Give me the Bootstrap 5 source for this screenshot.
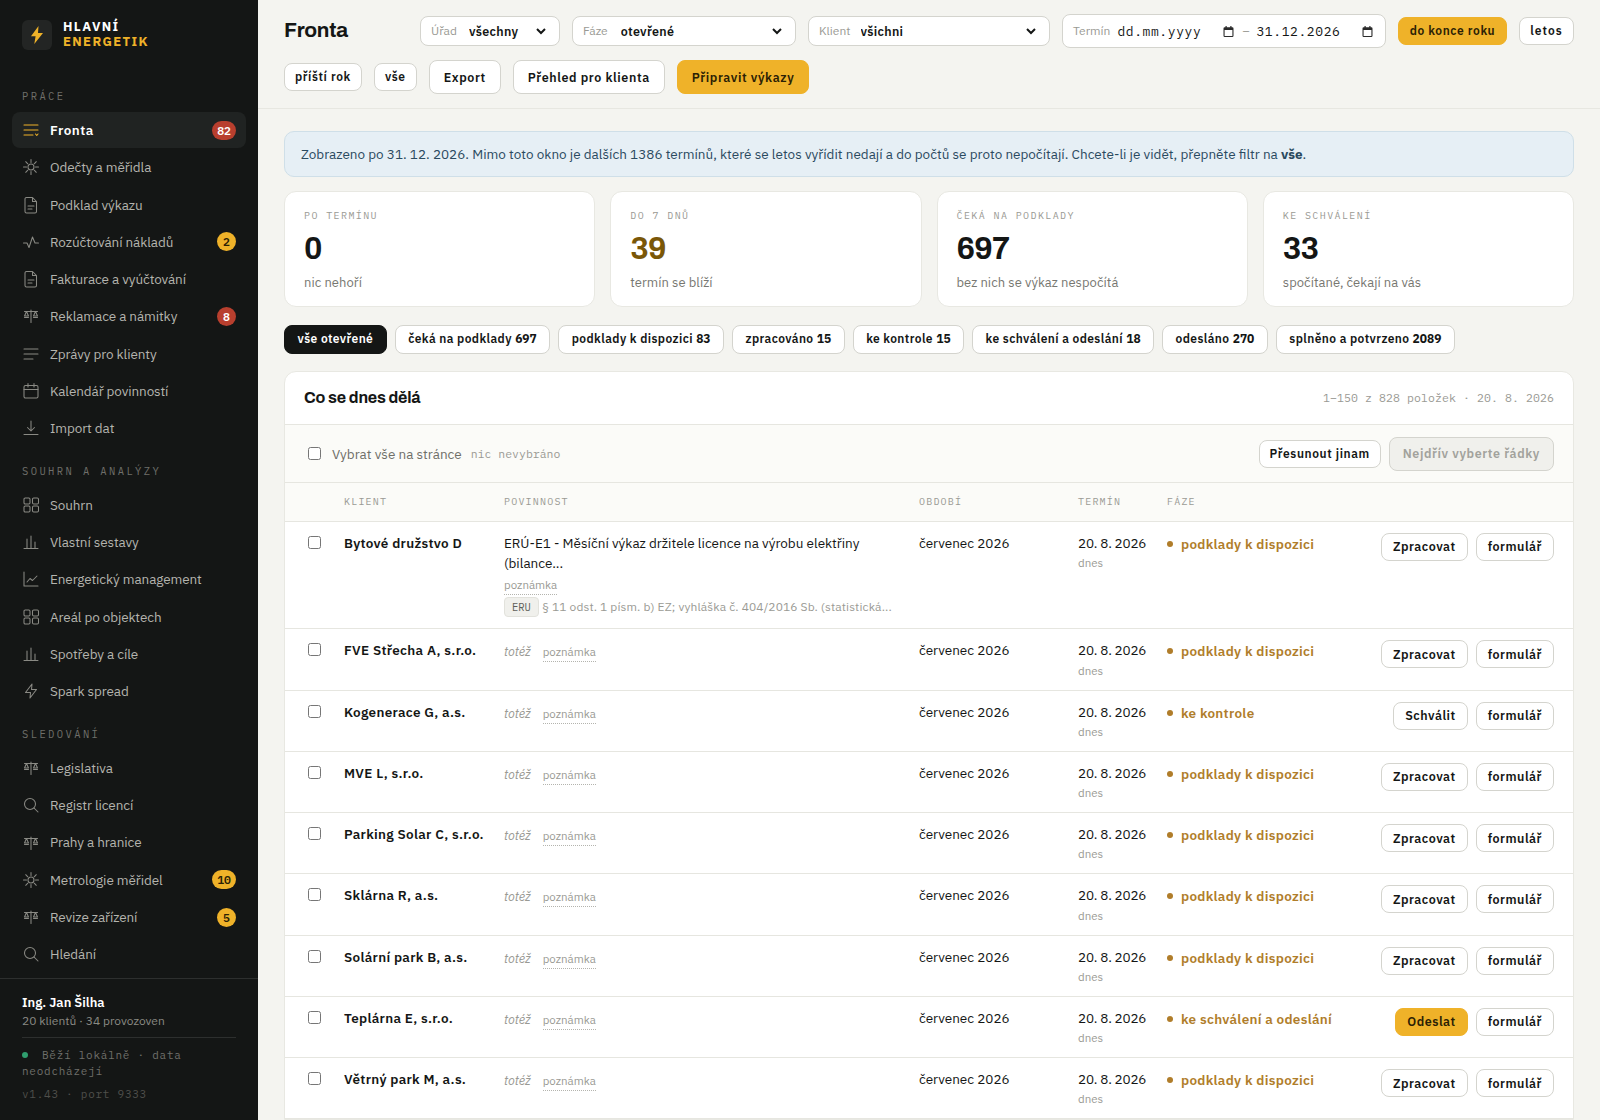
<!DOCTYPE html>
<html lang="cs">
  <head>
    <meta charset="UTF-8" />
    <meta name="viewport" content="width=device-width, initial-scale=1.0" />
    <title>Fronta</title>
    <link href="https://cdn.jsdelivr.net/npm/bootstrap@5.3.2/dist/css/bootstrap.min.css" rel="stylesheet" />
    <style>
      :root {
        --ink: #141615;
        --amber: #efb229;
        --line: #e6e6e0;
        --mute: #8f8f89;
        --sans: "IBM Plex Sans", "Noto Sans", "Liberation Sans", sans-serif;
        --mono: "IBM Plex Mono", "Liberation Mono", monospace;
        --head: "Archivo", "Liberation Sans", sans-serif;
      }
      html, body { height: 100%; }
      body {
        background-color: #f4f4f0;
        color: var(--ink);
        font-family: var(--sans);
        font-size: 13.5px;
        line-height: 1.5;
        overflow: hidden;
      }
      .app-shell { height: 1120px; }

      /* sidebar */
      .side {
        width: 258px;
        flex: none;
        background-color: var(--ink);
        color: #b4b4ae;
      }
      .side-brand { padding: 20px 22px 0; gap: 11px; height: 88px; }
      .brand-mark {
        width: 30px;
        height: 30px;
        border-radius: 6px;
        background-color: #232524;
        color: var(--amber);
      }
      .brand-name {
        font-size: 13px;
        font-weight: 700;
        line-height: 14.5px;
        letter-spacing: 1.4px;
        color: #fff;
      }
      .brand-name span { display: block; color: var(--amber); }
      .side-label {
        font-family: var(--mono);
        font-size: 10.5px;
        letter-spacing: 2.4px;
        color: #6f6f6a;
        padding: 0 10px;
        line-height: 16px;
        margin: 0 0 8px;
      }
      .side-nav { padding: 0 12px; }
      .side-group { margin-bottom: 16.6px; }
      .side-link {
        display: flex;
        align-items: center;
        gap: 10px;
        height: 36.25px;
        margin-bottom: 1px;
        padding: 0 10px;
        border-radius: 8px;
        letter-spacing: -.1px;
        color: #b4b4ae;
        text-decoration: none;
      }
      .side-link svg { width: 18px; height: 18px; flex: none; color: #8a8a84; }
      .side-link.active { background-color: #202322; color: #fff; font-weight: 600; letter-spacing: .5px; }
      .side-link.active svg { color: var(--amber); }
      .nav-count {
        margin-left: auto;
        min-width: 19px;
        height: 19px;
        padding: 0 5px;
        border-radius: 10px;
        font-family: var(--mono);
        font-size: 11.5px;
        font-weight: 600;
        letter-spacing: 0;
        line-height: 19px;
        text-align: center;
      }
      .nav-count.red { background-color: #b83f2e; color: #fff; }
      .nav-count.amber { background-color: var(--amber); color: #2b2105; }
      .side-foot { border-top: 1px solid #2d2f2e; padding: 14px 22px 0; height: 142px; margin-top: auto; }
      .foot-name { font-weight: 600; color: #fff; font-size: 13px; line-height: 19px; }
      .foot-sub { font-size: 12px; color: #8a8a84; line-height: 17px; padding-bottom: 8px; border-bottom: 1px solid #2d2f2e; }
      .foot-run { font-family: var(--mono); font-size: 11px; line-height: 16px; letter-spacing: .75px; color: #6f6f6a; margin-top: 9px; }
      .foot-dot { display: inline-block; width: 6px; height: 6px; border-radius: 50%; background-color: #2f9e6e; margin-right: 14px; vertical-align: 1px; }
      .foot-ver { font-family: var(--mono); font-size: 11px; line-height: 16px; letter-spacing: .75px; color: #4f4f4b; margin-top: 7px; }

      /* top bar */
      .main-col { min-width: 0; }
      .top-bar { padding: 14px 26px; gap: 12px; border-bottom: 1px solid #e7e7e1; }
      .page-title {
        font-family: var(--head);
        font-size: 21px;
        font-weight: 700;
        letter-spacing: -.3px;
        margin: 0 60px 0 0;
        width: 64px;
        white-space: nowrap;
      }
      .filter-box {
        display: flex;
        align-items: center;
        height: 30px;
        padding: 0 10px;
        gap: 9px;
        background-color: #fff;
        border: 1px solid #d4d4ce;
        border-radius: 8px;
      }
      .filter-box label { font-size: 12px; color: #9a9a94; margin: 0; }
      .filter-box select {
        flex: 1;
        min-width: 0;
        border: 0;
        background: transparent;
        padding: 0;
        outline: 0;
        font-family: var(--sans);
        font-size: 12.5px;
        font-weight: 600;
        letter-spacing: .3px;
        color: var(--ink);
      }
      .fb-office { width: 140px; gap: 8px; }
      .fb-phase { width: 224px; }
      .fb-client { width: 242px; gap: 6px; }
      .fb-date { width: 324px; height: 34px; gap: 7px; padding-right: 12px; }
      .date-field { display: flex; align-items: center; width: 118px; flex: none; }
      .date-field input {
        flex: 1;
        min-width: 0;
        height: 20px;
        border: 0;
        background: transparent;
        padding: 0;
        outline: 0;
        font-family: var(--mono);
        font-size: 13px;
        letter-spacing: .6px;
        color: var(--ink);
      }
      .date-field svg { margin-right: 1px; }
      .fb-date > span { color: #9a9a94; font-size: 12px; }
      .act {
        height: 34px;
        padding: 0 14px;
        background-color: #fff;
        border: 1px solid #d4d4ce;
        border-radius: 8px;
        font-size: 12.5px;
        font-weight: 600;
        letter-spacing: .6px;
        color: var(--ink);
        white-space: nowrap;
      }
      .act.slim { height: 28px; padding: 0 10px; font-size: 12px; }
      .act.gold { background-color: var(--amber); border-color: var(--amber); color: #2b2105; }
      .act.off { background-color: #f0f0ec; color: #a2a29c; padding: 0 13px; }
      .act.to-year { min-width: 109px; }
      .act.this-year { min-width: 55px; letter-spacing: 1px; }

      /* content */
      .page-body { padding: 22px 26px 0; }
      .note-bar {
        background-color: #e6eff5;
        border: 1px solid #cfdfe8;
        border-radius: 10px;
        padding: 12px 16px;
        color: #2b4a5f;
        margin-bottom: 14px;
      }
      .stat-grid { display: grid; grid-template-columns: repeat(4, 1fr); gap: 15px; margin-bottom: 18px; }
      .stat-box {
        height: 115.5px;
        padding: 15.5px 19px 0;
        background-color: #fff;
        border: 1px solid #e8e8e2;
        border-radius: 12px;
      }
      .stat-label { font-family: var(--mono); font-size: 10px; letter-spacing: 1.4px; color: #9a9a94; line-height: 15px; }
      .stat-num { font-family: var(--head); font-size: 31px; font-weight: 700; letter-spacing: -.8px; line-height: 40px; margin-top: 6px; }
      .stat-num.warn { color: #7a5708; }
      .stat-sub { font-size: 13px; letter-spacing: .05px; color: #777771; line-height: 19px; margin-top: 4px; }
      .tab-row { gap: 8px; margin-bottom: 17px; }
      .tab-chip {
        height: 29px;
        padding: 0 12.5px;
        background-color: #fff;
        border: 1px solid #d4d4ce;
        border-radius: 8px;
        font-size: 12px;
        font-weight: 600;
        letter-spacing: .4px;
        color: var(--ink);
        white-space: nowrap;
      }
      .tab-chip b { font-weight: 700; letter-spacing: 0; }
      .tab-chip.active { background-color: var(--ink); border-color: var(--ink); color: #fff; }
      .queue-card { background-color: #fff; border: 1px solid #e8e8e2; border-radius: 12px 12px 0 0; }
      .queue-head { height: 53px; padding: 0 19px; border-bottom: 1px solid var(--line); }
      .queue-title { font-family: var(--head); font-size: 16px; font-weight: 700; letter-spacing: -.2px; margin: 0; }
      .queue-meta { font-family: var(--mono); font-size: 11.5px; letter-spacing: .1px; color: #9a9a94; }
      .queue-tools { height: 58.5px; padding: 0 19px; background-color: #fbfbf8; border-bottom: 1px solid var(--line); }
      .queue-tools input, .queue-table input { margin: 3px 3px 3px 4px; }
      .tool-label { color: #6f6f69; font-size: 13.5px; margin-left: 8px; padding-top: 1px; }
      .tool-state { font-family: var(--mono); font-size: 11.5px; color: #9a9a94; margin-left: 9px; padding-top: 1px; }
      .queue-table { table-layout: fixed; width: 100%; margin: 0; color: var(--ink); }
      .queue-table th {
        height: 38px;
        padding: 0 10px 2px;
        background-color: #fbfbf8;
        border-bottom: 1px solid var(--line);
        font-family: var(--mono);
        font-size: 10px;
        font-weight: 400;
        letter-spacing: 1.2px;
        color: #9a9a94;
        vertical-align: middle;
      }
      .queue-table td {
        padding: 11px 10px 11px;
        border-bottom: 1px solid var(--line);
        vertical-align: top;
        background: transparent;
      }
      .queue-table td:first-child, .queue-table th:first-child { padding-left: 19px; padding-right: 0; }
      .queue-table td:last-child { padding-right: 19px; }
      .queue-table .c1 { width: 49px; }
      .queue-table .c2 { width: 160px; }
      .queue-table .c3 { width: 415px; }
      .queue-table .c4 { width: 159px; }
      .queue-table .c5 { width: 89px; }
      .queue-table .c6 { width: 213px; }
      .queue-table td.client-name { font-weight: 600; letter-spacing: .3px; white-space: nowrap; }
      .same-row { padding-top: 1px; }
      .same-text { font-size: 12.5px; font-style: italic; color: #9a9a94; margin-right: 12px; }
      .note-link { font-size: 11.5px; color: #9a9a94; border-bottom: 1px dotted #b4b4ae; padding-bottom: 2px; }
      .duty-note { line-height: 20px; margin-top: 1px; }
      .law-line { font-size: 12px; letter-spacing: .12px; color: #9a9a94; white-space: nowrap; line-height: 20px; margin-top: 2px; }
      .law-chip {
        display: inline-block;
        height: 20px;
        padding: 0 7px;
        margin-right: 3px;
        background-color: #f0f0ec;
        border: 1px solid #e2e2dc;
        border-radius: 4px;
        font-family: var(--mono);
        font-size: 10.5px;
        letter-spacing: 0;
        color: #5f5f59;
        line-height: 18px;
      }
      .due-date { white-space: nowrap; letter-spacing: -.2px; }
      .due-sub { font-size: 11.5px; letter-spacing: 0; color: #9a9a94; line-height: 17px; margin-top: 1px; }
      .phase-tag { display: block; margin-top: 1px; font-size: 13.5px; font-weight: 600; letter-spacing: .3px; color: #b07d2a; white-space: nowrap; }
      .phase-tag i { display: inline-block; width: 6px; height: 6px; border-radius: 50%; background-color: #b07d2a; margin-right: 8px; vertical-align: 2px; }
      .row-acts { gap: 8px; }
      .row-acts .act { height: 28px; padding: 0 11px; font-size: 12.5px; letter-spacing: .5px; }
    </style>
  </head>
  <body>
    <!-- icon set -->
    <svg width="0" height="0" class="position-absolute">
      <defs>
        <g id="i-queue" fill="none" stroke="currentColor" stroke-width="1.05" stroke-linecap="round" stroke-linejoin="round">
          <path d="M2 4h14M2 9h14M2 14h9M13.500 13l1.250 1.500L16 13" />
        </g>
        <g id="i-sun" fill="none" stroke="currentColor" stroke-width="1.05" stroke-linecap="round">
          <circle cx="9" cy="9" r="3" />
          <path d="M9 1.500v3M9 13.500v3M1.500 9h3M13.500 9h3M3.700 3.700l2.100 2.100M12.200 12.200l2.100 2.100M3.700 14.300l2.100-2.100M12.200 5.800l2.100-2.100" />
        </g>
        <g id="i-doc" fill="none" stroke="currentColor" stroke-width="1.05" stroke-linecap="round" stroke-linejoin="round">
          <path d="M4.500 1.500h6l4 4v10a1.500 1.500 0 0 1-1.500 1.500H4.500A1.500 1.500 0 0 1 3 15.500V3A1.500 1.500 0 0 1 4.500 1.500zM10.500 1.500v4h4M6 10h6M6 13h4" />
        </g>
        <g id="i-pulse" fill="none" stroke="currentColor" stroke-width="1.05" stroke-linecap="round" stroke-linejoin="round">
          <path d="M1.500 10H5l2 4.500L10.500 4l2.500 6h3.500" />
        </g>
        <g id="i-scale" fill="none" stroke="currentColor" stroke-width="1.05" stroke-linecap="round" stroke-linejoin="round">
          <path d="M9 3v12.500M2.500 4.500h13M4.500 4.500L2.500 9h4zM13.500 4.500L11.500 9h4zM2.500 10.500h4M11.500 10.500h4" />
        </g>
        <g id="i-lines" fill="none" stroke="currentColor" stroke-width="1.05" stroke-linecap="round">
          <path d="M2 4h14M2 9h14M2 14h9" />
        </g>
        <g id="i-cal" fill="none" stroke="currentColor" stroke-width="1.05" stroke-linecap="round">
          <rect x="2" y="3.500" width="14" height="12.500" rx="1.500" />
          <path d="M2 7.500h14M6 1.500v3.500M12 1.500v3.500" />
        </g>
        <g id="i-down" fill="none" stroke="currentColor" stroke-width="1.05" stroke-linecap="round" stroke-linejoin="round">
          <path d="M9 2v9.500M5.500 8.500L9 12l3.500-3.500M2 15.500h14" />
        </g>
        <g id="i-grid" fill="none" stroke="currentColor" stroke-width="1.05">
          <rect x="2" y="2" width="6" height="6" rx="1.200" />
          <rect x="10.500" y="2" width="6" height="6" rx="1.200" />
          <rect x="2" y="10" width="6" height="6" rx="1.200" />
          <rect x="10.500" y="10" width="6" height="6" rx="1.200" />
        </g>
        <g id="i-bars" fill="none" stroke="currentColor" stroke-width="1.05" stroke-linecap="round">
          <path d="M2 15.500h14M5 15.500V6M9 15.500V3M13 15.500V9" />
        </g>
        <g id="i-chart" fill="none" stroke="currentColor" stroke-width="1.05" stroke-linecap="round" stroke-linejoin="round">
          <path d="M2 2v14h14M5 12l3-3.500 2.500 2L15 6" />
        </g>
        <g id="i-bolt" fill="none" stroke="currentColor" stroke-width="1.05" stroke-linejoin="round">
          <path d="M10 2L3.500 10.500H8.500L8 16l6.500-8.500H9.500z" />
        </g>
        <g id="i-search" fill="none" stroke="currentColor" stroke-width="1.05" stroke-linecap="round">
          <circle cx="8" cy="8" r="5.500" />
          <path d="M12 12l4 4" />
        </g>
        <g id="i-date">
          <path fill="#2a2a2a" fill-rule="evenodd" d="M2.500 0h1.200v1.200h3.600V0h1.200v1.200h.8A1.200 1.200 0 0 1 10.500 2.400v7.400A1.200 1.200 0 0 1 9.300 11H1.700A1.200 1.200 0 0 1 .5 9.800V2.400A1.200 1.200 0 0 1 1.700 1.200h.8zM1.600 4v5.900h7.800V4z" />
        </g>
      </defs>
    </svg>

    <div class="app-shell d-flex">
      <!-- Sidebar -->
      <aside class="side d-flex flex-column">
        <div class="side-brand d-flex align-items-start">
          <div class="brand-mark d-flex align-items-center justify-content-center">
            <svg width="14" height="18" viewBox="0 0 14 18"><path fill="currentColor" d="M8.500 0L1 10.200h4.600L4.300 18 13 7H8z" /></svg>
          </div>
          <div class="brand-name">HLAVNÍ<span>ENERGETIK</span></div>
        </div>
        <nav class="side-nav">
          <div class="side-group">
            <p class="side-label">PRÁCE</p>
            <a class="side-link active" href="#"><svg viewBox="0 0 18 18"><use href="#i-queue" /></svg>Fronta<span class="nav-count red">82</span></a>
            <a class="side-link" href="#"><svg viewBox="0 0 18 18"><use href="#i-sun" /></svg>Odečty a měřidla</a>
            <a class="side-link" href="#"><svg viewBox="0 0 18 18"><use href="#i-doc" /></svg>Podklad výkazu</a>
            <a class="side-link" href="#"><svg viewBox="0 0 18 18"><use href="#i-pulse" /></svg>Rozúčtování nákladů<span class="nav-count amber">2</span></a>
            <a class="side-link" href="#"><svg viewBox="0 0 18 18"><use href="#i-doc" /></svg>Fakturace a vyúčtování</a>
            <a class="side-link" href="#"><svg viewBox="0 0 18 18"><use href="#i-scale" /></svg>Reklamace a námitky<span class="nav-count red">8</span></a>
            <a class="side-link" href="#"><svg viewBox="0 0 18 18"><use href="#i-lines" /></svg>Zprávy pro klienty</a>
            <a class="side-link" href="#"><svg viewBox="0 0 18 18"><use href="#i-cal" /></svg>Kalendář povinností</a>
            <a class="side-link" href="#"><svg viewBox="0 0 18 18"><use href="#i-down" /></svg>Import dat</a>
          </div>
          <div class="side-group">
            <p class="side-label">SOUHRN A ANALÝZY</p>
            <a class="side-link" href="#"><svg viewBox="0 0 18 18"><use href="#i-grid" /></svg>Souhrn</a>
            <a class="side-link" href="#"><svg viewBox="0 0 18 18"><use href="#i-bars" /></svg>Vlastní sestavy</a>
            <a class="side-link" href="#"><svg viewBox="0 0 18 18"><use href="#i-chart" /></svg>Energetický management</a>
            <a class="side-link" href="#"><svg viewBox="0 0 18 18"><use href="#i-grid" /></svg>Areál po objektech</a>
            <a class="side-link" href="#"><svg viewBox="0 0 18 18"><use href="#i-bars" /></svg>Spotřeby a cíle</a>
            <a class="side-link" href="#"><svg viewBox="0 0 18 18"><use href="#i-bolt" /></svg>Spark spread</a>
          </div>
          <div class="side-group mb-0">
            <p class="side-label">SLEDOVÁNÍ</p>
            <a class="side-link" href="#"><svg viewBox="0 0 18 18"><use href="#i-scale" /></svg>Legislativa</a>
            <a class="side-link" href="#"><svg viewBox="0 0 18 18"><use href="#i-search" /></svg>Registr licencí</a>
            <a class="side-link" href="#"><svg viewBox="0 0 18 18"><use href="#i-scale" /></svg>Prahy a hranice</a>
            <a class="side-link" href="#"><svg viewBox="0 0 18 18"><use href="#i-sun" /></svg>Metrologie měřidel<span class="nav-count amber">10</span></a>
            <a class="side-link" href="#"><svg viewBox="0 0 18 18"><use href="#i-scale" /></svg>Revize zařízení<span class="nav-count amber">5</span></a>
            <a class="side-link" href="#"><svg viewBox="0 0 18 18"><use href="#i-search" /></svg>Hledání</a>
          </div>
        </nav>
        <div class="side-foot">
          <div class="foot-name">Ing. Jan Šilha</div>
          <div class="foot-sub">20 klientů · 34 provozoven</div>
          <div class="foot-run"><span class="foot-dot"></span>Běží lokálně · data neodcházejí</div>
          <div class="foot-ver">v1.43 · port 9333</div>
        </div>
      </aside>

      <!-- Main -->
      <main class="main-col flex-grow-1">
        <header class="top-bar d-flex flex-wrap align-items-center">
          <h1 class="page-title">Fronta</h1>
          <div class="filter-box fb-office"><label>Úřad</label><select><option>všechny</option></select></div>
          <div class="filter-box fb-phase"><label>Fáze</label><select><option>otevřené</option></select></div>
          <div class="filter-box fb-client"><label>Klient</label><select><option>všichni</option></select></div>
          <div class="filter-box fb-date">
            <label>Termín</label>
            <div class="date-field"><input type="text" value="dd.mm.yyyy" /><svg width="11" height="11" viewBox="0 0 11 11"><use href="#i-date" /></svg></div>
            <span>–</span>
            <div class="date-field"><input type="text" value="31.12.2026" /><svg width="11" height="11" viewBox="0 0 11 11"><use href="#i-date" /></svg></div>
          </div>
          <button class="act slim gold to-year" type="button">do konce roku</button>
          <button class="act slim this-year" type="button">letos</button>
          <button class="act slim" type="button">příští rok</button>
          <button class="act slim" type="button">vše</button>
          <button class="act" type="button">Export</button>
          <button class="act" type="button">Přehled pro klienta</button>
          <button class="act gold" type="button">Připravit výkazy</button>
        </header>

        <div class="page-body">
          <div class="note-bar">Zobrazeno po 31. 12. 2026. Mimo toto okno je dalších 1386 termínů, které se letos vyřídit nedají a do počtů se proto nepočítají. Chcete-li je vidět, přepněte filtr na <b>vše</b>.</div>

          <div class="stat-grid">
            <div class="stat-box"><div class="stat-label">PO TERMÍNU</div><div class="stat-num">0</div><div class="stat-sub">nic nehoří</div></div>
            <div class="stat-box"><div class="stat-label">DO 7 DNŮ</div><div class="stat-num warn">39</div><div class="stat-sub">termín se blíží</div></div>
            <div class="stat-box"><div class="stat-label">ČEKÁ NA PODKLADY</div><div class="stat-num">697</div><div class="stat-sub">bez nich se výkaz nespočítá</div></div>
            <div class="stat-box"><div class="stat-label">KE SCHVÁLENÍ</div><div class="stat-num">33</div><div class="stat-sub">spočítané, čekají na vás</div></div>
          </div>

          <div class="tab-row d-flex">
            <button class="tab-chip active" type="button">vše otevřené</button>
            <button class="tab-chip" type="button">čeká na podklady <b>697</b></button>
            <button class="tab-chip" type="button">podklady k dispozici <b>83</b></button>
            <button class="tab-chip" type="button">zpracováno <b>15</b></button>
            <button class="tab-chip" type="button">ke kontrole <b>15</b></button>
            <button class="tab-chip" type="button">ke schválení a odeslání <b>18</b></button>
            <button class="tab-chip" type="button">odesláno <b>270</b></button>
            <button class="tab-chip" type="button">splněno a potvrzeno <b>2089</b></button>
          </div>

          <section class="queue-card">
            <div class="queue-head d-flex align-items-center justify-content-between">
              <h2 class="queue-title">Co se dnes dělá</h2>
              <span class="queue-meta">1–150 z 828 položek · 20. 8. 2026</span>
            </div>
            <div class="queue-tools d-flex align-items-center">
              <input type="checkbox" /><span class="tool-label">Vybrat vše na stránce</span><span class="tool-state">nic nevybráno</span>
              <div class="d-flex align-items-center gap-2 ms-auto">
                <button class="act slim" type="button">Přesunout jinam</button>
                <button class="act off" type="button">Nejdřív vyberte řádky</button>
              </div>
            </div>
            <table class="table queue-table">
              <colgroup>
                <col class="c1" /><col class="c2" /><col class="c3" /><col class="c4" /><col class="c5" /><col class="c6" /><col />
              </colgroup>
              <thead>
                <tr><th></th><th>KLIENT</th><th>POVINNOST</th><th>OBDOBÍ</th><th>TERMÍN</th><th>FÁZE</th><th></th></tr>
              </thead>
              <tbody id="queue-rows"></tbody>
            </table>
          </section>
        </div>
      </main>
    </div>

    <script>
      const rows = [
        ["Bytové družstvo D", "podklady k dispozici", "Zpracovat"],
        ["FVE Střecha A, s.r.o.", "podklady k dispozici", "Zpracovat"],
        ["Kogenerace G, a.s.", "ke kontrole", "Schválit"],
        ["MVE L, s.r.o.", "podklady k dispozici", "Zpracovat"],
        ["Parking Solar C, s.r.o.", "podklady k dispozici", "Zpracovat"],
        ["Sklárna R, a.s.", "podklady k dispozici", "Zpracovat"],
        ["Solární park B, a.s.", "podklady k dispozici", "Zpracovat"],
        ["Teplárna E, s.r.o.", "ke schválení a odeslání", "Odeslat"],
        ["Větrný park M, a.s.", "podklady k dispozici", "Zpracovat"],
      ];
      const firstDuty = `ERÚ-E1 - Měsíční výkaz držitele licence na výrobu elektřiny (bilance...
        <div class="duty-note"><span class="note-link">poznámka</span></div>
        <div class="law-line"><span class="law-chip">ERU</span>§ 11 odst. 1 písm. b) EZ; vyhláška č. 404/2016 Sb. (statistická...</div>`;
      const sameDuty = `<div class="same-row"><span class="same-text">totéž</span><span class="note-link">poznámka</span></div>`;

      const tableBody = document.getElementById("queue-rows");
      rows.forEach((row, i) => {
        const gold = row[2] === "Odeslat" ? " gold" : "";
        const tr = document.createElement("tr");
        tr.innerHTML = `
          <td><input type="checkbox" /></td>
          <td class="client-name">${row[0]}</td>
          <td>${i === 0 ? firstDuty : sameDuty}</td>
          <td>červenec 2026</td>
          <td class="due-date">20. 8. 2026<div class="due-sub">dnes</div></td>
          <td><span class="phase-tag"><i></i>${row[1]}</span></td>
          <td><div class="row-acts d-flex justify-content-end"><button class="act${gold}" type="button">${row[2]}</button><button class="act" type="button">formulář</button></div></td>
        `;
        tableBody.appendChild(tr);
      });
    </script>
    <script src="https://cdn.jsdelivr.net/npm/bootstrap@5.3.2/dist/js/bootstrap.bundle.min.js"></script>
  </body>
</html>
